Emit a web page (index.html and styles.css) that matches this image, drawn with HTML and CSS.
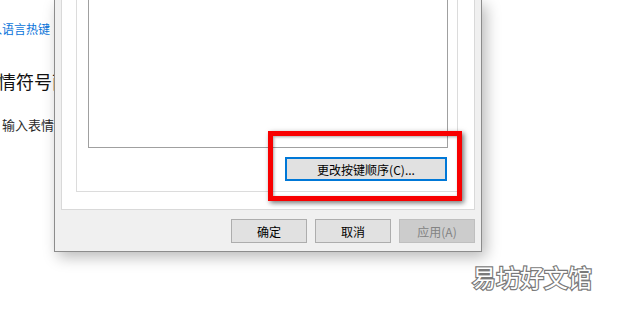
FILE: index.html
```html
<!DOCTYPE html>
<html>

<head>
    <meta charset="UTF-8">
    <title>文本服务和输入语言</title>
    <link rel="stylesheet" href="styles.css">
</head>

<body>
    <!-- The settings page behind the dialog, cut off at the left edge. -->
    <div class="behind">
        <a class="link" href="#"><span class="cut">输入语言热键</span></a>
        <h2 class="heading">情符号面板</h2>
        <p class="note">输入表情符号</p>
    </div>

    <div class="dialog">
        <div class="tab-page">
            <div class="group">
                <div class="listbox"></div>
                <button class="btn btn-focus">更改按键顺序(C)...</button>
            </div>
        </div>
        <div class="actions">
            <button class="btn">确定</button>
            <button class="btn">取消</button>
            <button class="btn" disabled>应用(A)</button>
        </div>
    </div>

    <!-- Annotation drawn over the screenshot. -->
    <div class="highlight"></div>
    <div class="watermark">易坊好文馆</div>
</body>

</html>
```

FILE: styles.css
```css
body {
    margin: 0;
    width: 620px;
    height: 309px;
    overflow: hidden;
    background: #ffffff;
    display: flex;
    align-items: flex-start;
    font-family: "Noto Sans CJK SC", "Noto Sans", sans-serif;
    position: relative;
}

/* Settings window */
.behind {
    width: 54px;
    height: 309px;
    overflow: hidden;
    white-space: nowrap;
    background: #ffffff;
}

.link {
    display: block;
    margin-top: 21px;
    font-size: 12px;
    line-height: 16px;
    color: #0a74da;
    text-decoration: none;
}

.cut {
    display: inline-block;
    margin-left: -22px;
}

.heading {
    margin: 32px 0 0 -2px;
    font-size: 18px;
    font-weight: normal;
    line-height: 24px;
    color: #111111;
}

.note {
    margin: 23px 0 0 2px;
    font-size: 13px;
    line-height: 18px;
    color: #2a2a2a;
}

/* Dialog */
.dialog {
    box-sizing: border-box;
    width: 428px;
    height: 252px;
    display: flex;
    flex-direction: column;
    background: #f0f0f0;
    border: 1px solid #8c8c8c;
    border-top: none;
    padding: 0 6px 8px 6px;
    box-shadow: 4px 5px 14px rgba(0, 0, 0, 0.28);
}

.tab-page {
    flex: 1;
    margin-top: -10px;
    display: flex;
    flex-direction: column;
    background: #ffffff;
    border: 1px solid #d9d9d9;
    padding: 0 16px 17px 14px;
}

.group {
    flex: 1;
    margin-top: -10px;
    display: flex;
    flex-direction: column;
    border: 1px solid #dcdcdc;
    padding: 0 9px 10px 11px;
}

.listbox {
    flex: 1;
    background: #ffffff;
    border: 1px solid #a0a0a0;
    margin-bottom: 9px;
}

.btn {
    box-sizing: border-box;
    width: 76px;
    height: 24px;
    padding: 0;
    background: #e1e1e1;
    border: 1px solid #adadad;
    font-family: "Noto Sans CJK SC", "Noto Sans", sans-serif;
    font-size: 12px;
    color: #000000;
}

.btn-focus {
    align-self: flex-end;
    width: 162px;
    margin-right: 1px;
    border: 2px solid #0078d7;
}

.btn:disabled {
    background: #cccccc;
    border-color: #bfbfbf;
    color: #838383;
}

.actions {
    display: flex;
    justify-content: flex-end;
    gap: 8px;
    margin-top: 9px;
}

/* Red highlight around the button */
.highlight {
    position: absolute;
    left: 268px;
    top: 131px;
    width: 184px;
    height: 60px;
    border: 5px solid #f80000;
    box-shadow: 2px 2px 5px rgba(0, 0, 0, 0.55), inset 1px 1px 3px rgba(0, 0, 0, 0.35);
}

/* White letters with a grey outline */
.watermark {
    position: absolute;
    left: 472px;
    top: 261px;
    font-size: 24px;
    line-height: 32px;
    color: #ffffff;
    -webkit-text-stroke: 2.4px #7a7a7a;
    paint-order: stroke fill;
}
```
